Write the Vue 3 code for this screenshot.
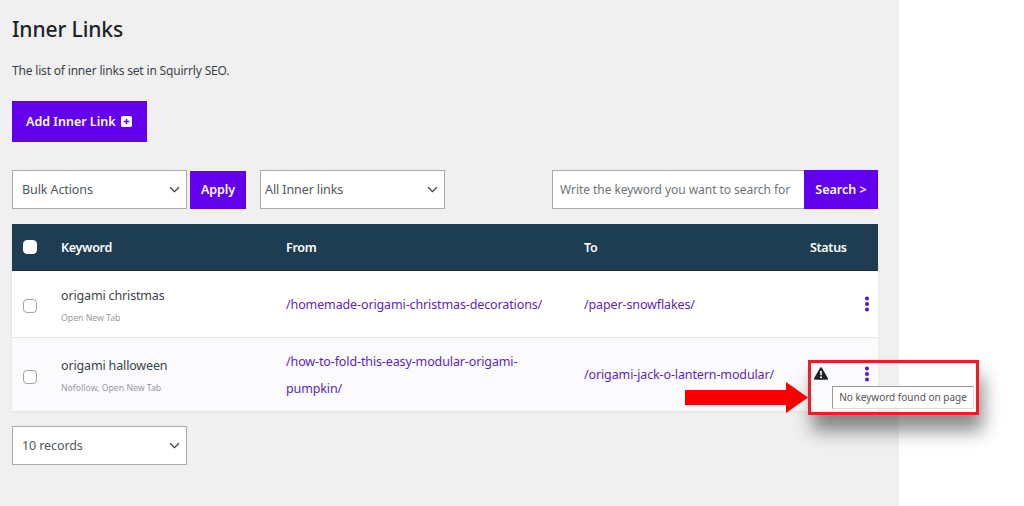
<script setup>
const rows = [
  { keyword: 'origami christmas', meta: 'Open New Tab', from: '/homemade-origami-christmas-decorations/', to: '/paper-snowflakes/', warn: false },
  { keyword: 'origami halloween', meta: 'Nofollow, Open New Tab', from: '/how-to-fold-this-easy-modular-origami-pumpkin/', to: '/origami-jack-o-lantern-modular/', warn: true },
]
</script>

<template>
  <div class="page">
    <main class="panel">
      <h1 class="title">Inner Links</h1>
      <p class="lead">The list of inner links set in Squirrly SEO.</p>
      <button class="add-btn" type="button">
        Add Inner Link
        <svg class="plus" viewBox="0 0 12 12" width="11" height="11"><path fill="#fff" fill-rule="evenodd" d="M2 0h8a2 2 0 0 1 2 2v8a2 2 0 0 1-2 2H2a2 2 0 0 1-2-2V2a2 2 0 0 1 2-2zm3.2 3v2.2H3v1.6h2.2V9h1.6V6.8H9V5.2H6.8V3z"/></svg>
      </button>

      <div class="toolbar">
        <div class="select bulk">
          <span>Bulk Actions</span>
          <svg class="chev" viewBox="0 0 12 8" width="11" height="7"><path d="M1 1.5l5 5 5-5" fill="none" stroke="#3c434a" stroke-width="1.5"/></svg>
        </div>
        <button class="apply" type="button">Apply</button>
        <div class="select filter">
          <span>All Inner links</span>
          <svg class="chev" viewBox="0 0 12 8" width="11" height="7"><path d="M1 1.5l5 5 5-5" fill="none" stroke="#3c434a" stroke-width="1.5"/></svg>
        </div>
        <div class="search">
          <input class="search-input" type="text" placeholder="Write the keyword you want to search for" />
          <button class="search-btn" type="button">Search &gt;</button>
        </div>
      </div>

      <div class="table">
        <div class="row head">
          <span class="check-cell"><span class="box box-head"></span></span>
          <span>Keyword</span>
          <span>From</span>
          <span>To</span>
          <span>Status</span>
        </div>
        <div v-for="(r, i) in rows" :key="r.keyword" class="row body" :class="{ alt: i === 1 }">
          <span class="check-cell"><span class="box"></span></span>
          <div class="kw">
            <div class="kw-name">{{ r.keyword }}</div>
            <div class="kw-meta">{{ r.meta }}</div>
          </div>
          <div class="link from">{{ r.from }}</div>
          <div class="link">{{ r.to }}</div>
          <div class="status">
            <svg v-if="r.warn" class="warn" viewBox="0 0 14 13" width="14" height="13"><path fill="#1d2327" fill-rule="evenodd" d="M7 .3c.4 0 .7.2.9.5l5.900 10.300c.4.7-.1 1.600-.9 1.600H1.100c-.8 0-1.300-.9-.9-1.600L6.100.8C6.300.5 6.600.3 7 .3zM6.100 4l.2 4.300h1.400L7.900 4zM7 9.200a1 1 0 1 0 0 2 1 1 0 0 0 0-2z"/></svg>
            <svg class="dots" viewBox="0 0 6 16" width="6" height="16"><circle cx="3" cy="2.500" r="2" fill="#5a12cf"/><circle cx="3" cy="8" r="2" fill="#5a12cf"/><circle cx="3" cy="13.500" r="2" fill="#5a12cf"/></svg>
          </div>
        </div>
      </div>

      <div class="select records">
        <span>10 records</span>
        <svg class="chev" viewBox="0 0 12 8" width="11" height="7"><path d="M1 1.500l5 5 5-5" fill="none" stroke="#3c434a" stroke-width="1.500"/></svg>
      </div>
    </main>

    <div class="callout"></div>
    <div class="tooltip">No keyword found on page</div>
    <svg class="arrow" viewBox="0 0 123 31" width="123" height="31"><path fill="#f90000" d="M0 8h101V0l22 15.500L101 31v-8H0z"/></svg>
  </div>
</template>

<style>
html, body { margin: 0; background: #fff; }
</style>

<style scoped>
.page {
  position: relative;
  width: 1024px;
  height: 506px;
  overflow: hidden;
  background: #fff;
  font-family: "Noto Sans", sans-serif;
  color: #3c434a;
}
.panel {
  box-sizing: border-box;
  width: 899px;
  height: 506px;
  padding: 14px 21px 0 12px;
  background: #f0f0f1;
}
.title {
  margin: 0;
  font-size: 21px;
  line-height: 30px;
  font-weight: 500;
  letter-spacing: -.1px;
  color: #1d2327;
}
.lead {
  margin: 18px 0 0;
  font-size: 12px;
  line-height: 18px;
  letter-spacing: -.18px;
  color: #3c434a;
}
.add-btn {
  display: flex;
  align-items: center;
  gap: 5px;
  height: 41px;
  width: 135px;
  margin-top: 21px;
  padding: 0 0 0 14px;
  border: 0;
  background: #6200ee;
  color: #fff;
  font: 600 12.500px "Noto Sans", sans-serif;
}
.plus { flex: none; }
.toolbar {
  display: flex;
  align-items: center;
  margin-top: 28px;
  height: 39px;
}
.select {
  box-sizing: border-box;
  display: flex;
  align-items: center;
  justify-content: space-between;
  height: 39px;
  background: #fff;
  border: 1px solid #aaa;
  font-size: 12.500px;
  letter-spacing: -.1px;
  color: #50575e;
}
.bulk { width: 175px; padding: 0 6px 0 9px; }
.filter { width: 185px; padding: 0 6px 0 4px; margin-left: 14px; }
.records { width: 175px; padding: 0 6px 0 9px; margin-top: 15px; }
.chev { flex: none; }
.apply {
  width: 56px;
  height: 38px;
  margin-left: 3px;
  padding: 0;
  border: 0;
  background: #6200ee;
  color: #fff;
  font: 600 12.500px "Noto Sans", sans-serif;
  letter-spacing: -.1px;
}
.search {
  display: flex;
  margin-left: auto;
  height: 39px;
}
.search-input {
  box-sizing: border-box;
  width: 252px;
  height: 39px;
  padding: 0 10px 0 7px;
  border: 1px solid #aaa;
  border-right: 0;
  border-radius: 0;
  outline: 0;
  background: #fff;
  font: 12px "Noto Sans", sans-serif;
  letter-spacing: -.05px;
}
.search-input::placeholder { color: #6e7479; opacity: 1; }
.search-btn {
  width: 74px;
  height: 39px;
  padding: 0;
  border: 0;
  background: #6200ee;
  color: #fff;
  font: 600 12.500px "Noto Sans", sans-serif;
}
.table {
  margin-top: 15px;
  box-shadow: 0 1px 3px rgba(0, 0, 0, .06);
}
.row {
  display: grid;
  grid-template-columns: 49px 225px 298px 226px 68px;
  align-items: center;
}
.head {
  height: 47px;
  background: #1e3d52;
  border-bottom: 1px solid #16303f;
  color: #fff;
  font-size: 12.500px;
  letter-spacing: -.3px;
  font-weight: 600;
  box-sizing: border-box;
}
.body {
  box-sizing: border-box;
  height: 67px;
  background: #fff;
  border-bottom: 1px solid #e6e6e9;
}
.body.alt {
  height: 73px;
  background: #fbfbfe;
  border-bottom: 0;
}
.check-cell {
  display: flex;
  padding-left: 11px;
}
.box {
  box-sizing: border-box;
  width: 14px;
  height: 14px;
  border: 1px solid #a5a5a8;
  border-radius: 4px;
  background: #fff;
  margin-top: 4px;
}
.box-head {
  border-color: #fff;
  margin-top: 0;
}
.kw-name {
  font-size: 12.500px;
  letter-spacing: -.15px;
  line-height: 18px;
  color: #3c434a;
  margin-top: 2px;
}
.kw-meta {
  margin-top: 7px;
  font-size: 8.700px;
  line-height: 12px;
  color: #9a9a9e;
}
.link {
  font-size: 12.500px;
  letter-spacing: -.12px;
  line-height: 27px;
  color: #5b1fc4;
}
.from { padding-right: 24px; }
.status {
  position: relative;
  display: flex;
  align-items: flex-start;
  justify-content: flex-end;
  height: 16px;
  padding-right: 8px;
  margin-top: -1px;
}
.warn { position: absolute; left: 4px; top: 1px; }
.callout {
  position: absolute;
  left: 808px;
  top: 360px;
  width: 165px;
  height: 49px;
  border: 3px solid #ee1c25;
  box-shadow: 4px 16px 18px rgba(0, 0, 0, .45);
}
.tooltip {
  box-sizing: border-box;
  position: absolute;
  left: 832px;
  top: 386px;
  width: 142px;
  height: 23px;
  background: #fff;
  border: 1px solid #999;
  border-right-color: #ddd;
  border-bottom-color: #ddd;
  font-size: 10px;
  line-height: 21px;
  text-align: center;
  color: #555;
}
.arrow {
  position: absolute;
  left: 685px;
  top: 382px;
}
</style>
